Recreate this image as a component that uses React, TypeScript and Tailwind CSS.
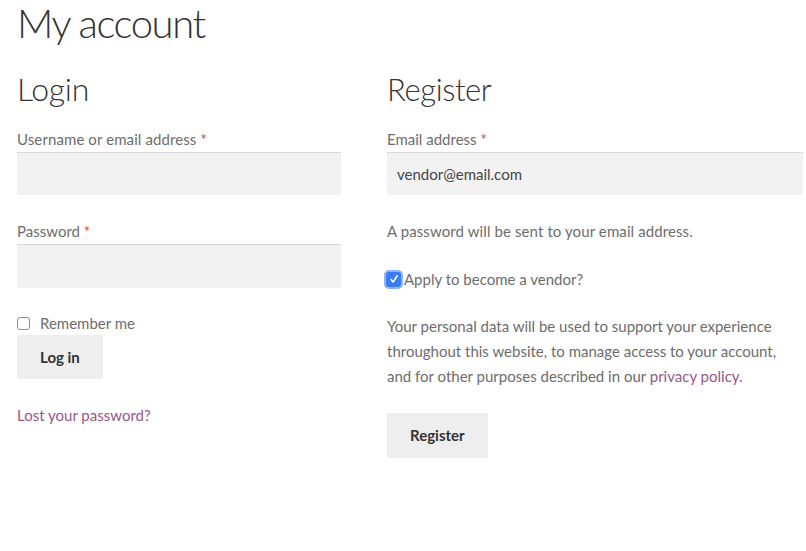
export default function App() {
  return (
    <div className="min-h-[551px] w-[806px] overflow-hidden bg-white font-['Lato','Liberation_Sans',sans-serif] text-[15px] text-[#6d6d6d]">
      <h1 className="pl-[17px] text-[40px] leading-[46px] font-light tracking-[-1.4px] text-[#333]">My account</h1>

      <div className="mt-[23px] flex gap-[46px] pl-[17px]">
        <LoginForm />
        <RegisterForm />
      </div>
    </div>
  );
}

function Required() {
  return <span className="text-[#e2401c]">*</span>;
}

function LoginForm() {
  return (
    <div className="w-[324px] shrink-0">
      <h2 className="text-[32px] leading-[40px] font-light tracking-[-0.3px] text-[#333]">Login</h2>

      <label className="mt-[19px] block leading-[22px] tracking-[0.1px]">
        Username or email address <Required />
      </label>
      <input type="text" className="mt-[2px] block h-[43px] w-full bg-[#f2f2f2] px-[10px] shadow-[inset_0_1px_0_#d8d8d8] outline-none" />

      <label className="mt-[25px] block leading-[22px]">
        Password <Required />
      </label>
      <input type="password" className="mt-[2px] block h-[44px] w-full bg-[#f2f2f2] px-[10px] shadow-[inset_0_1px_0_#d8d8d8] outline-none" />

      <label className="mt-[24px] flex items-center gap-[10px] leading-[22px]">
        <span className="block h-[13px] w-[13px] shrink-0 rounded-[3px] border border-[#8f8f8f] bg-white" />
        Remember me
      </label>
      <button type="button" className="mt-[1px] block h-[44px] bg-[#eeeeee] px-[23px] text-[15px] font-bold text-[#333]">
        Log in
      </button>

      <a href="#" className="mt-[25px] block leading-[22px] text-[#96588a]">
        Lost your password?
      </a>
    </div>
  );
}

function RegisterForm() {
  return (
    <div className="w-[416px] shrink-0">
      <h2 className="text-[31px] leading-[40px] font-light tracking-[-0.4px] text-[#333]">Register</h2>

      <label className="mt-[19px] block leading-[22px]">
        Email address <Required />
      </label>
      <input
        type="email"
        defaultValue="vendor@email.com"
        className="mt-[2px] block h-[43px] w-full bg-[#f2f2f2] px-[10px] text-[#43454b] shadow-[inset_0_1px_0_#d8d8d8] outline-none"
      />

      <p className="mt-[25px] leading-[22px] tracking-[0.1px]">A password will be sent to your email address.</p>

      <label className="mt-[26px] flex items-center leading-[22px]">
        <span className="-ml-[1px] mr-[3px] flex h-[15px] w-[15px] shrink-0 items-center justify-center rounded-[3px] bg-[#3a7cf4] ring-[2px] ring-[#8db3f8]">
          <svg viewBox="0 0 12 12" className="h-[12px] w-[12px]" fill="none" stroke="white" strokeWidth="1.6" strokeLinecap="round" strokeLinejoin="round">
            <path d="M3 6.5 L5.2 9 L9.2 2.8" />
          </svg>
        </span>
        Apply to become a vendor?
      </label>

      <p className="mt-[24px] leading-[25px]">
        Your personal data will be used to support your experience throughout this website, to manage access to your account, and for other purposes described in our{' '}
        <a href="#" className="text-[#96588a]">
          privacy policy
        </a>
        .
      </p>

      <button type="button" className="mt-[24px] block h-[45px] bg-[#eeeeee] px-[23px] text-[15px] font-bold text-[#333]">
        Register
      </button>
    </div>
  );
}
